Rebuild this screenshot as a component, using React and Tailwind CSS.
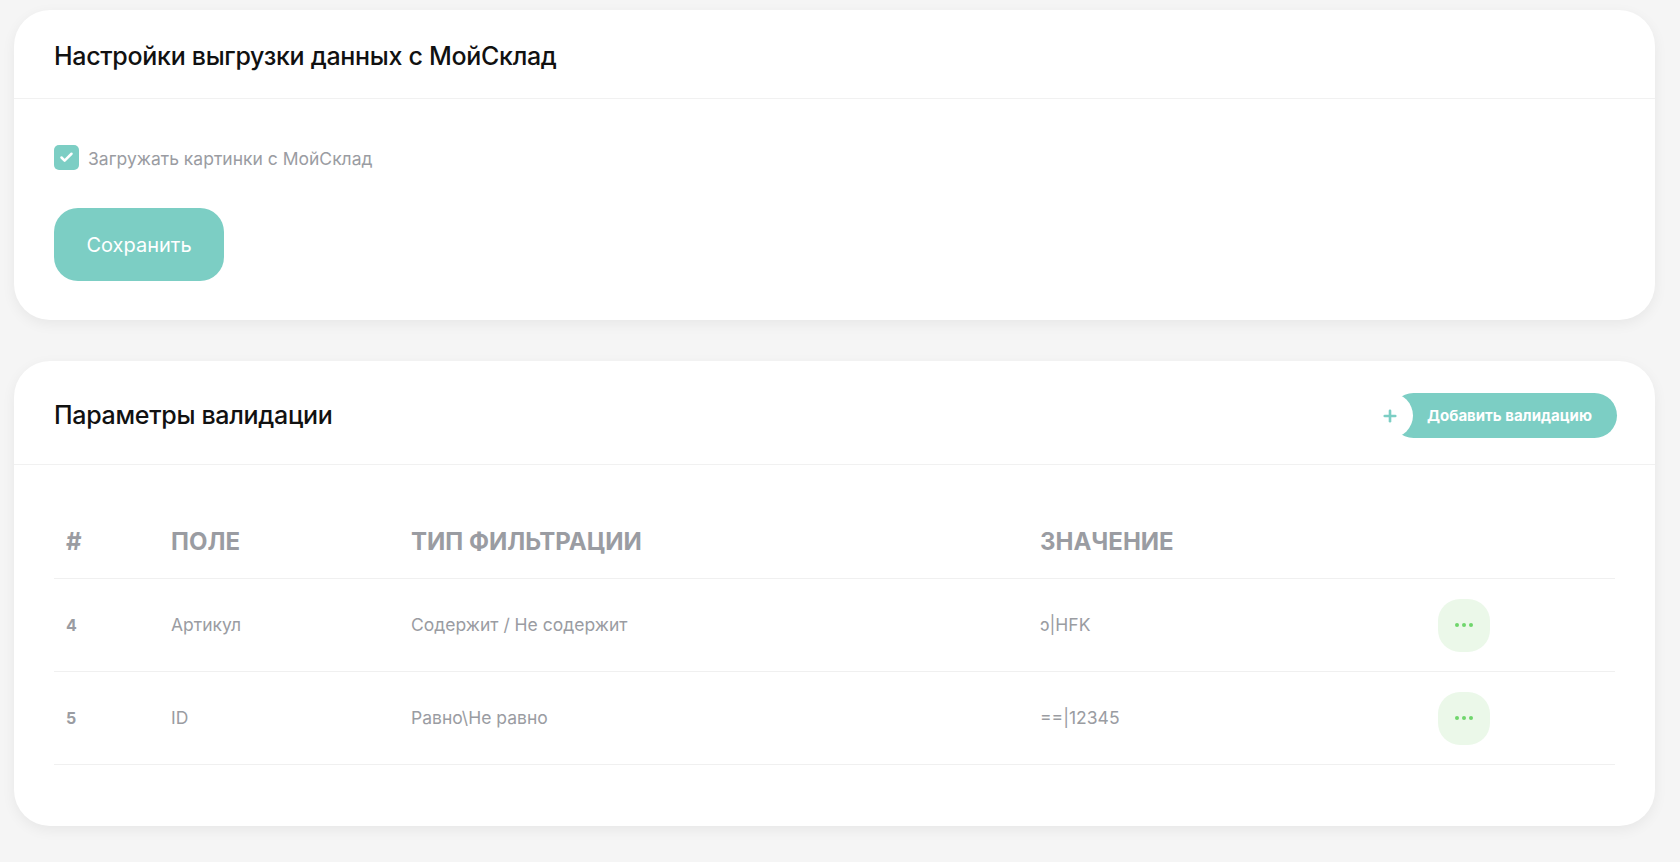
import { Check, Plus } from 'lucide-react';

const rows = [
  { id: 4, field: 'Артикул', type: 'Содержит / Не содержит', value: 'ɔ|HFK' },
  { id: 5, field: 'ID', type: 'Равно\\Не равно', value: '==|12345' },
];

function Card({ children }) {
  return (
    <div className="bg-white rounded-[36px] shadow-[0_4px_14px_rgba(0,0,0,0.06)]">
      {children}
    </div>
  );
}

export default function App() {
  return (
    <div
      className="min-h-screen bg-[#f5f5f5] pt-[10px] pl-[14px] pr-[25px] pb-10"
      style={{ fontFamily: 'Inter, "Noto Sans", sans-serif' }}
    >
      <div className="flex flex-col gap-[41px]">
        {/* Настройки выгрузки */}
        <Card>
          <div className="h-[89px] flex items-center pt-[6px] px-10 border-b border-[#f1f1f1]">
            <h2 className="text-[25px] font-medium text-[#111] tracking-[-0.3px]">Настройки выгрузки данных с МойСклад</h2>
          </div>
          <div className="px-10 pt-[43px] pb-[39px]">
            <label className="flex items-center gap-[9px]">
              <span className="w-[25px] h-[25px] rounded-[5px] bg-[#7ccec4] flex items-center justify-center">
                <Check size={15} strokeWidth={4} className="text-white" />
              </span>
              <span className="text-[17.5px] text-[#9a9ca2] pt-[4px]">Загружать картинки с МойСклад</span>
            </label>
            <button className="mt-[36px] w-[170px] h-[73px] rounded-[24px] bg-[#7ccec4] text-white text-[20px]">
              Сохранить
            </button>
          </div>
        </Card>

        {/* Параметры валидации */}
        <Card>
          <div className="h-[104px] flex items-center justify-between pt-[6px] pl-10 pr-[38px] border-b border-[#f1f1f1]">
            <h2 className="text-[25px] font-medium text-[#111] tracking-[-0.3px]">Параметры валидации</h2>
            <button className="relative flex items-center h-[45px]">
              <span className="absolute left-[-24px] top-0 w-[46px] h-[45px] rounded-full bg-white flex items-center justify-center z-10">
                <Plus size={18} strokeWidth={3.5} className="text-[#7ccec4]" />
              </span>
              <span className="h-[45px] w-[226px] rounded-full bg-[#7ccec4] text-white text-[15px] font-bold flex items-center pl-[36px]">
                Добавить валидацию
              </span>
            </button>
          </div>
          <div className="px-10 pt-[40px] pb-[61px]">
            <div className="grid grid-cols-[105px_240px_629px_398px_1fr] h-[74px] items-center border-b border-[#f0f0f0] text-[24px] font-bold text-[#9a9ca2] uppercase">
              <div className="px-3">#</div>
              <div className="px-3">Поле</div>
              <div className="px-3">Тип фильтрации</div>
              <div className="px-3">Значение</div>
              <div></div>
            </div>
            {rows.map((row) => (
              <div
                key={row.id}
                className="grid grid-cols-[105px_240px_629px_398px_1fr] h-[93px] items-center border-b border-[#f0f0f0] text-[17.5px] text-[#9a9ca2]"
              >
                <div className="px-3 font-bold text-[16px]">{row.id}</div>
                <div className="px-3">{row.field}</div>
                <div className="px-3">{row.type}</div>
                <div className="px-3">{row.value}</div>
                <div className="px-3">
                  <button className="w-[52px] h-[53px] rounded-[22px] bg-[#ebf8e9] flex items-center justify-center gap-[3px]">
                    <span className="w-[4px] h-[4px] rounded-full bg-[#6fd66c]"></span>
                    <span className="w-[4px] h-[4px] rounded-full bg-[#6fd66c]"></span>
                    <span className="w-[4px] h-[4px] rounded-full bg-[#6fd66c]"></span>
                  </button>
                </div>
              </div>
            ))}
          </div>
        </Card>
      </div>
    </div>
  );
}
